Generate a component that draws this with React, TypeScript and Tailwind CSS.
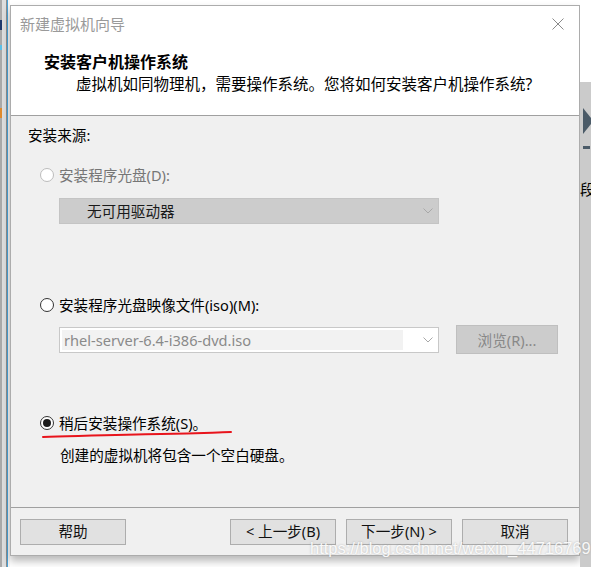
import React from "react";

const font = "font-['Noto_Sans','Noto_Sans_CJK_SC',sans-serif]";

function Radio({ checked, disabled }: { checked?: boolean; disabled?: boolean }) {
  return (
    <span
      className={`flex h-[14px] w-[14px] shrink-0 items-center justify-center rounded-full border bg-white ${
        disabled ? "border-[#bcbcbc]" : "border-[#333333]"
      }`}
    >
      {checked && <span className="h-[8px] w-[8px] rounded-full bg-[#1b1b1b]" />}
    </span>
  );
}

function Chevron() {
  return (
    <svg width="10" height="6" viewBox="0 0 10 6" className="shrink-0">
      <path d="M0.5 0.5 L5 5 L9.5 0.5" fill="none" stroke="#a8a8a8" strokeWidth="1" />
    </svg>
  );
}

function Button({ children }: { children: React.ReactNode }) {
  return (
    <div className="flex h-[26px] w-[106px] items-center justify-center border border-[#adadad] bg-[#e1e1e1] text-[14.6px] text-[#111]">
      {children}
    </div>
  );
}

export default function App() {
  return (
    <div className={`relative flex h-[567px] w-[591px] overflow-hidden bg-white ${font}`}>
      {/* left edge of the window behind */}
      <div className="flex h-full w-[10px] shrink-0">
        <div className="flex h-full w-[2px] flex-col bg-[#a9a9a9]">
          <div className="mt-[20px] h-[10px] bg-[#1f3a6e]" />
          <div className="mt-[15px] h-[5px] bg-[#5bc0e8]" />
          <div className="mt-[58px] h-[10px] bg-[#e08a2c]" />
        </div>
        <div className="h-full w-[4px] bg-[#dedede]" />
        <div className="h-full w-[1px] bg-[#8f8f8f]" />
        <div className="h-full w-[1px] bg-[#4aa3d8]" />
        <div className="h-full w-[2px] bg-[#f4f4f4]" />
      </div>

      {/* dialog */}
      <div className="mt-[5px] flex h-[551px] w-[570px] shrink-0 flex-col border border-[#acacac] bg-[#f0f0f0] shadow-[0_5px_8px_rgba(0,0,0,0.28)]">
        <div className="h-[110px] shrink-0 border-b border-[#a0a0a0] bg-white">
          <div className="flex h-[36px] items-center justify-between pl-[9px] pr-[15px]">
            <span className="text-[15px] text-[#9a9a9a]">新建虚拟机向导</span>
            <svg width="12" height="12" viewBox="0 0 12 12">
              <path d="M0.5 0.5 L11.5 11.5 M11.5 0.5 L0.5 11.5" stroke="#8a8a8a" strokeWidth="1" />
            </svg>
          </div>
          <div className="mt-[9px] pl-[33px] text-[16px] font-bold leading-[22px] text-black">安装客户机操作系统</div>
          <div className="pl-[65px] text-[15.5px] leading-[23px] text-black">
            虚拟机如同物理机，需要操作系统。您将如何安装客户机操作系统?
          </div>
        </div>

        <div className="relative flex h-[391px] shrink-0 flex-col text-[14.6px] leading-[20px] text-black">
          <div className="mt-[9px] pl-[17px]">安装来源:</div>

          <div className="mt-[20px] flex items-center gap-[5px] pl-[29px] text-[#767676]">
            <Radio disabled />
            <span>安装程序光盘(D):</span>
          </div>
          <div className="ml-[48px] mt-[13px] flex h-[26px] w-[380px] items-center justify-between border border-[#c4c4c4] bg-[#cccccc] pl-[27px] pr-[5px]">
            <span className="text-[#1a1a1a]">无可用驱动器</span>
            <Chevron />
          </div>

          <div className="mt-[71px] flex items-center gap-[5px] pl-[29px]">
            <Radio />
            <span>安装程序光盘映像文件(iso)(M):</span>
          </div>
          <div className="ml-[48px] mt-[10px] flex h-[29px] items-center gap-[17px]">
            <div className="flex h-[26px] w-[380px] items-center border border-[#c8c8c8] bg-white p-[2px] pr-[5px]">
              <div className="flex h-full flex-1 items-center bg-[#f2f2f2] pl-[2px] text-[#8a8a8a]">
                rhel-server-6.4-i386-dvd.iso
              </div>
              <div className="flex w-[30px] justify-end">
                <Chevron />
              </div>
            </div>
            <div className="flex h-[29px] w-[102px] items-center justify-center border border-[#bfbfbf] bg-[#cccccc] text-[#888888]">
              浏览(R)...
            </div>
          </div>

          <div className="mt-[59px] flex items-center gap-[5px] pl-[29px]">
            <Radio checked />
            <span>稍后安装操作系统(S)。</span>
          </div>
          <div className="mt-[12px] pl-[49px]">创建的虚拟机将包含一个空白硬盘。</div>

          <svg className="absolute left-[30px] top-[313px]" width="192" height="10" viewBox="0 0 192 10">
            <path
              d="M2 8 C 40 7, 80 5.5, 120 5 S 170 3.5, 190 3"
              fill="none"
              stroke="#e8141c"
              strokeWidth="2"
              strokeLinecap="round"
            />
          </svg>
        </div>

        <div className="flex h-[48px] shrink-0 items-start border-t border-[#a0a0a0] pl-[9px] pt-[11px]">
          <Button>帮助</Button>
          <div className="ml-[104px] flex gap-[10px]">
            <Button>&lt; 上一步(B)</Button>
            <Button>下一步(N) &gt;</Button>
            <Button>取消</Button>
          </div>
        </div>
      </div>

      {/* right edge of the window behind */}
      <div className="flex h-full w-[11px] shrink-0 flex-col">
        <div className="h-[82px] bg-white" />
        <div className="flex flex-1 flex-col bg-[#cbcbcb]">
          <svg className="mt-[26px]" width="11" height="26" viewBox="0 0 11 26">
            <path d="M3 0 L11 10 L11 16 L3 26 Z" fill="#4b5b68" />
          </svg>
          <div className="ml-[3px] mt-[12px] h-[3px] w-[7px] bg-[#4b5b68]" />
          <div className="mt-[31px] overflow-hidden whitespace-nowrap text-[15px] leading-[18px] text-black">段</div>
        </div>
      </div>

      <div className="pointer-events-none absolute left-[310px] top-[539px] font-['Liberation_Sans',sans-serif] text-[16.5px] leading-[18px] text-white/90 [text-shadow:0_0_2px_rgba(120,120,120,0.55)]">
        https://blog.csdn.net/weixin_44716769
      </div>
    </div>
  );
}
